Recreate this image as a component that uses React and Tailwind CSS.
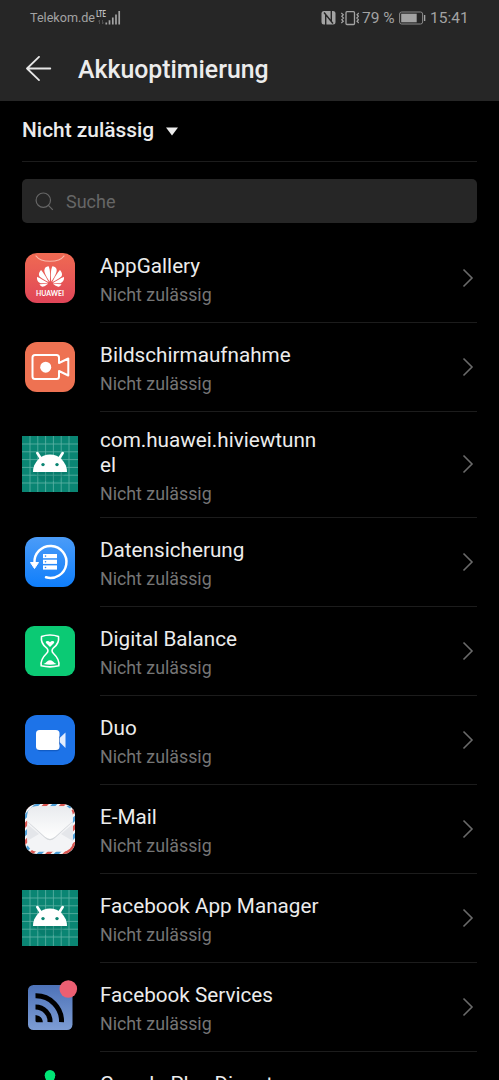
import { SiHuawei } from "react-icons/si";

const AppGalleryIcon = () => (
  <div className="relative w-[50px] h-[50px] rounded-xl bg-linear-to-b from-[#ef6a52] to-[#e04558] overflow-hidden text-white">
    <svg viewBox="0 0 50 50" className="w-full h-full">
      <path
        d="M11 3C16 10 34 10 39 3"
        fill="none"
        stroke="#f8b9aa"
        strokeWidth="1.2"
        strokeLinecap="round"
      />
      <text
        x="11"
        y="42.6"
        textLength="28"
        lengthAdjust="spacingAndGlyphs"
        fill="#fff"
        className="font-[Lato,sans-serif] font-bold text-[6.9px]"
      >
        HUAWEI
      </text>
    </svg>
    <SiHuawei className="absolute left-[11.5px] top-[10.5px] w-[27px] h-[27px]" />
  </div>
);

const RecorderIcon = () => (
  <svg viewBox="0 0 50 50" className="w-[50px] h-[50px]">
    <rect width="50" height="50" rx="12" fill="#ee7252" />
    <g fill="none" stroke="#fff" strokeWidth="2" strokeLinejoin="round">
      <path d="M10 13H31.5Q34 13 34 15.5V21L43.3 16.5V33.5L34 29V34.5Q34 37 31.5 37H10Q7.5 37 7.5 34.5V15.5Q7.5 13 10 13Z" />
    </g>
    <circle cx="20.7" cy="25.2" r="5.5" fill="#fff" />
  </svg>
);

const gridLines = [8, 15.8, 23.6, 31.4, 39.2, 47];

const AndroidIcon = () => (
  <svg viewBox="0 0 56 56" className="w-14 h-14">
    <rect width="56" height="56" fill="#0a8573" />
    <g stroke="#5fb3a6" strokeWidth="0.8">
      {gridLines.map((p) => (
        <path key={p} d={`M${p} 0V56M0 ${p}H56`} />
      ))}
    </g>
    <path d="M11 36L20 45L36 45L45 36Z" fill="#04695a" opacity="0.25" />
    <path d="M11 36A17 17.5 0 0 1 45 36Z" fill="#fff" />
    <path
      d="M15.3 17L19.5 23.5M40.7 17L36.5 23.5"
      stroke="#fff"
      strokeWidth="2.6"
      strokeLinecap="round"
    />
    <circle cx="21" cy="28.6" r="1.7" fill="#0a8573" />
    <circle cx="35" cy="28.6" r="1.7" fill="#0a8573" />
  </svg>
);

const BackupIcon = () => (
  <svg viewBox="0 0 50 50" className="w-[50px] h-[50px]">
    <defs>
      <linearGradient id="backup" x1="0" y1="0" x2="0" y2="1">
        <stop offset="0" stopColor="#4b9cf8" />
        <stop offset="1" stopColor="#0f7efb" />
      </linearGradient>
    </defs>
    <rect width="50" height="50" rx="12" fill="url(#backup)" />
    <path
      d="M9.5 26A16 16 0 1 1 21 40.3"
      fill="none"
      stroke="#fff"
      strokeWidth="2.5"
      strokeLinecap="round"
    />
    <path d="M5.5 25.5H13.5L9.5 31.5Z" fill="#fff" stroke="#fff" strokeLinejoin="round" />
    <g fill="#fff">
      <rect x="18" y="17" width="14" height="4.2" />
      <rect x="18" y="22.7" width="14" height="4.2" />
      <rect x="18" y="28.4" width="14" height="4.2" />
    </g>
    <g fill="#2b8afa">
      <circle cx="20.5" cy="19.1" r="0.8" />
      <circle cx="20.5" cy="24.8" r="0.8" />
      <circle cx="20.5" cy="30.5" r="0.8" />
    </g>
  </svg>
);

const BalanceIcon = () => (
  <svg viewBox="0 0 50 50" className="w-[50px] h-[50px]">
    <rect width="50" height="50" rx="9" fill="#0bca74" />
    <path
      d="M16.5 10.5Q25 7.5 33.5 10.5Q34.5 17.5 28.5 21.8Q25.6 24.8 28.5 27.5Q34.8 33.5 33.8 39.8Q25 42 16.2 39.8Q15.2 33.5 21.5 27.5Q24.4 24.8 21.5 21.8Q15.5 17.5 16.5 10.5Z"
      fill="none"
      stroke="#fff"
      strokeWidth="1.6"
      strokeLinejoin="round"
    />
    <path d="M25 21L21 17Q20.2 15 22.3 15Q24 15 25 16.2Q26 15 27.7 15Q29.8 15 29 17Z" fill="#fff" />
    <path d="M18.5 38Q20.5 37 22 35.5Q25 32.8 28 35.5Q29.5 37 31.5 38Q25 39.3 18.5 38Z" fill="#fff" />
  </svg>
);

const DuoIcon = () => (
  <svg viewBox="0 0 50 50" className="w-[50px] h-[50px]">
    <rect width="50" height="50" rx="12" fill="#1d73e8" />
    <path d="M12 33.5Q12 36 15 36.3H32Q34.5 36 34.5 33.5Z" fill="#0c4dab" opacity="0.6" />
    <path d="M32.5 25L40.5 17.5V33Z" fill="#e3edfd" />
    <rect x="11" y="15" width="23.5" height="20" rx="3.5" fill="#fff" />
    <path d="M34.5 21.5V29.5" stroke="#1557b8" strokeWidth="0.6" />
  </svg>
);

// colours of the airmail stripes, in turn round the envelope
const stripes = ["#d95550", "#4d9fd8"];

const MailIcon = () => (
  <svg viewBox="0 0 50 50" className="w-[50px] h-[50px]">
    <defs>
      <clipPath id="mail">
        <rect width="50" height="50" rx="12" />
      </clipPath>
      <linearGradient id="flap" x1="0" y1="0" x2="0" y2="1">
        <stop offset="0" stopColor="#e9ebee" />
        <stop offset="1" stopColor="#ffffff" />
      </linearGradient>
    </defs>
    <g clipPath="url(#mail)">
      <rect width="50" height="50" fill="#f5f6f8" />
      {[...Array(13)].map((_, i) => (
        <path
          key={i}
          d={`M${i * 8.6 + 6} -2L${i * 8.6 - 48} 52`}
          stroke={stripes[i % 2]}
          strokeWidth="3.8"
        />
      ))}
      <rect x="2.2" y="2.2" width="45.6" height="45.6" rx="10" fill="#f3f4f6" />
      <path d="M2.2 20L14 30L2.2 37Z" fill="#e4e6ea" />
      <path d="M47.8 20L36 30L47.8 37Z" fill="#e4e6ea" />
      <path d="M2.2 17.8L20 34Q25 38.5 30 34L47.8 17.8Z" fill="#d3d6da" />
      <path d="M2.2 12Q2.2 2.2 12 2.2H38Q47.8 2.2 47.8 12V17L30 32.8Q25 37 20 32.8L2.2 17Z" fill="url(#flap)" />
    </g>
  </svg>
);

const FacebookServicesIcon = () => (
  <svg viewBox="0 0 50 50" className="w-[50px] h-[50px] overflow-visible">
    <defs>
      <linearGradient id="fbs" x1="0" y1="0" x2="0" y2="1">
        <stop offset="0" stopColor="#4d72b8" />
        <stop offset="1" stopColor="#7d9dd4" />
      </linearGradient>
    </defs>
    <rect x="3" y="3" width="44.5" height="45" rx="5.5" fill="url(#fbs)" />
    <g fill="none" stroke="#000" strokeWidth="5">
      <path d="M10.5 13.8A25.5 25.5 0 0 1 36.5 40.2" />
      <path d="M10.5 25A14.5 14.5 0 0 1 25 40.2" />
    </g>
    <path d="M10.5 33Q17.5 34 17.8 40.2H12Q10.5 40.2 10.5 38.7Z" fill="#000" />
    <circle cx="43.3" cy="7" r="8.8" fill="#ec5f72" />
  </svg>
);

const PlayServicesIcon = () => (
  <svg viewBox="0 0 50 50" className="w-[50px] h-[50px] overflow-visible">
    <path d="M20 6L23 15H27L30 6Z" fill="#00e676" />
    <circle cx="25" cy="4.2" r="5.3" fill="#00e676" />
  </svg>
);

const apps = [
  { name: "AppGallery", icon: AppGalleryIcon },
  { name: "Bildschirmaufnahme", icon: RecorderIcon },
  { name: "com.huawei.hiviewtunnel", icon: AndroidIcon },
  { name: "Datensicherung", icon: BackupIcon },
  { name: "Digital Balance", icon: BalanceIcon },
  { name: "Duo", icon: DuoIcon },
  { name: "E-Mail", icon: MailIcon },
  { name: "Facebook App Manager", icon: AndroidIcon },
  { name: "Facebook Services", icon: FacebookServicesIcon },
  { name: "Google Play Dienste", icon: PlayServicesIcon },
];

const StatusBar = () => (
  <div className="flex items-center justify-between h-9 pl-[30px] pr-[31px] text-[#a3a3a3]">
    <div className="flex items-center">
      <span className="text-[12.6px] leading-4 w-[66px] whitespace-nowrap">Telekom.de</span>
      <svg viewBox="0 0 26 16" className="w-[26px] h-4">
        <text x="0.3" y="7.2" textLength="9.5" lengthAdjust="spacingAndGlyphs" fill="#c0c0c0" className="text-[9.5px] font-bold">
          LTE
        </text>
        <path d="M3.5 14V10L2.5 11.5M6.5 10V14L7.5 12.5" stroke="#555" fill="none" strokeWidth="0.9" />
        <path d="M10.3 14.5V12.5M13.5 14.5V10.2M16.8 14.5V7.5M20 14.5V4.5M23.2 14.5V1" stroke="#a3a3a3" strokeWidth="1.7" />
      </svg>
    </div>
    <div className="flex items-center">
      <svg viewBox="0 0 38 16" className="w-[38px] h-4">
        <rect x="0.5" y="1" width="14" height="13.5" rx="2.5" fill="#a3a3a3" />
        <path
          d="M4.7 15V4.5L10.3 11.5V1M4.7 4.5L3 2.5M10.3 11.5L12 13.5"
          stroke="#262626"
          strokeWidth="1.4"
          fill="none"
        />
        <rect x="25" y="1.7" width="8.5" height="12.8" rx="1" fill="none" stroke="#a3a3a3" strokeWidth="1.3" />
        <path
          d="M20.3 3L22.3 4.7L20.8 6.3L22.5 8L20.8 9.7L22.3 11.3L20.3 13M37.8 3L36 4.7L37.4 6.3L35.8 8L37.4 9.7L36 11.3L37.8 13"
          stroke="#a3a3a3"
          strokeWidth="1.2"
          fill="none"
        />
      </svg>
      <span className="text-[15.5px] leading-4 ml-[3px] w-[37px] whitespace-nowrap">79 %</span>
      <svg viewBox="0 0 27 14" className="w-[27px] h-3.5">
        <rect x="0.6" y="1" width="23" height="12" rx="2" fill="none" stroke="#8a8a8a" />
        <rect x="2.2" y="2.7" width="15.5" height="8.6" fill="#a3a3a3" />
        <path d="M25.6 4V10" stroke="#a3a3a3" strokeWidth="1.4" />
      </svg>
      <span className="text-[15.5px] leading-4 ml-1 w-[38px] whitespace-nowrap">15:41</span>
    </div>
  </div>
);

const AppRow = ({ name, icon: Icon }) => (
  <li className="flex">
    <div className="w-14 mr-[22px] pb-0.5 flex items-center justify-center shrink-0">
      <Icon />
    </div>
    <div className="flex-1 min-h-[89px] pt-4 pb-[13px] flex items-center border-b border-[#1c1c1c]">
      <div>
        <p className="w-[226px] text-[20.7px] leading-[24.5px] text-[#ececec] wrap-anywhere">{name}</p>
        <p className="mt-1.5 text-[17.8px] leading-[21px] text-[#757575]">Nicht zulässig</p>
      </div>
      <svg
        viewBox="0 0 12 20"
        className="w-3 h-5 ml-auto mr-[3px] -mt-1"
        fill="none"
        stroke="#6a6a6a"
        strokeWidth="1.6"
      >
        <path d="M1.5 1.5L10 10L1.5 18.5" />
      </svg>
    </div>
  </li>
);

const App = () => {
  return (
    <div className="w-[499px] h-[1080px] overflow-hidden bg-black font-[Roboto,sans-serif]">
      <header className="h-[101px] bg-[#262626]">
        <StatusBar />
        <div className="flex items-center h-[65px] pl-[25px]">
          <svg
            viewBox="0 0 27 26"
            className="w-[27px] h-[26px]"
            fill="none"
            stroke="#e6e6e6"
            strokeWidth="1.8"
            strokeLinecap="round"
            strokeLinejoin="round"
          >
            <path d="M14 0.9L2 12.5L14 24.1M2 12.5H25.3" />
          </svg>
          <h1 className="ml-[26px] mt-0.5 text-[24.85px] leading-8 font-medium text-[#ececec]">Akkuoptimierung</h1>
        </div>
      </header>

      <main className="px-[22px]">
        <div className="flex items-center h-[61px] pb-[3px] border-b border-[#1c1c1c]">
          <span className="text-[20.9px] leading-6 font-medium text-[#ececec]">Nicht zulässig</span>
          <svg viewBox="0 0 12 9" className="w-3 h-[9px] ml-3 mt-1">
            <path d="M0 0.5H12L6 8.5Z" fill="#ececec" />
          </svg>
        </div>

        <div className="flex items-center h-11 mt-[17px] mb-[11px] pl-[13px] rounded-[5px] bg-[#262626]">
          <svg viewBox="0 0 19 19" className="w-[19px] h-[19px]" fill="none" stroke="#666" strokeWidth="1.2">
            <circle cx="8.3" cy="8.2" r="7.2" />
            <path d="M13.4 13.3L17.8 17.8" />
          </svg>
          <span className="ml-3 mt-px text-[18px] leading-6 text-[#666]">Suche</span>
        </div>

        <ul>
          {apps.map((app) => (
            <AppRow key={app.name} {...app} />
          ))}
        </ul>
      </main>
    </div>
  );
};

export default App;
